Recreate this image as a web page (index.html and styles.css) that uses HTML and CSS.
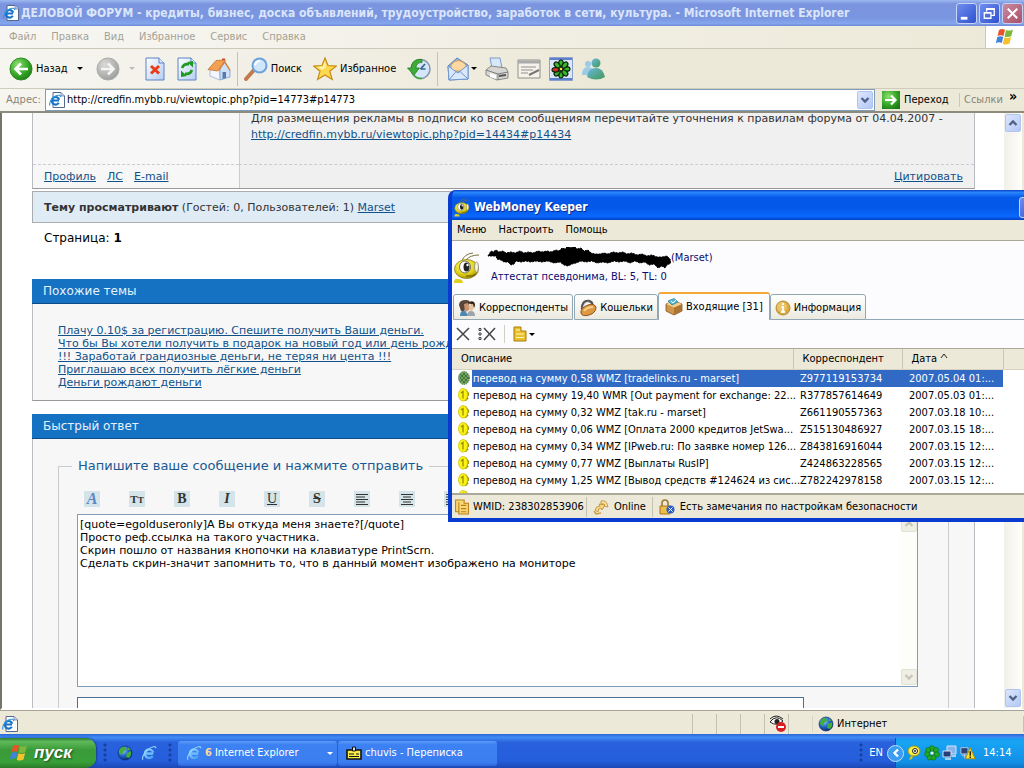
FILE: index.html
```html
<!DOCTYPE html>
<html lang="ru">
<head>
<meta charset="utf-8">
<title>ДЕЛОВОЙ ФОРУМ - Microsoft Internet Explorer</title>
<link rel="stylesheet" href="styles.css">
</head>
<body>
<svg class="defs" aria-hidden="true">
  <defs>
    <linearGradient id="gBlue" x1="0" y1="0" x2="1" y2="1"><stop offset="0" stop-color="#9adcff"/><stop offset="1" stop-color="#3d9cf0"/></linearGradient>
    <radialGradient id="gGreen" cx=".35" cy=".3" r=".8"><stop offset="0" stop-color="#8be070"/><stop offset=".6" stop-color="#35a527"/><stop offset="1" stop-color="#1b7a14"/></radialGradient>
    <radialGradient id="gGray" cx=".35" cy=".3" r=".8"><stop offset="0" stop-color="#dadad8"/><stop offset="1" stop-color="#999"/></radialGradient>
    <linearGradient id="gPage" x1="0" y1="0" x2="1" y2="1"><stop offset="0" stop-color="#fff"/><stop offset="1" stop-color="#b4cdf3"/></linearGradient>
    <radialGradient id="gYellow" cx=".4" cy=".3" r=".8"><stop offset="0" stop-color="#fdfb7a"/><stop offset=".6" stop-color="#dfcf13"/><stop offset="1" stop-color="#8c7c05"/></radialGradient>
    <radialGradient id="gGlobe" cx=".35" cy=".3" r=".8"><stop offset="0" stop-color="#9fd8ff"/><stop offset=".5" stop-color="#2463c8"/><stop offset="1" stop-color="#06205f"/></radialGradient>
    <linearGradient id="gPeople" x1="0" y1="0" x2="1" y2="1"><stop offset="0" stop-color="#6cb6df"/><stop offset="1" stop-color="#3f9a56"/></linearGradient>
  </defs>
  <symbol id="ie" viewBox="0 0 16 16">
    <path d="M4.500 8.600h7.600M11.800 11a4.300 4.300 0 1 1 .5-3.400" fill="none" stroke="url(#gBlue)" stroke-width="2.400"/>
    <path d="M4.500 8.600h7.600" fill="none" stroke="#6fbcf8" stroke-width="2"/>
    <path d="M2.200 14.600C.2 14 2.500 8.500 6.500 5S15 .5 14.800 3.200" fill="none" stroke="#8fd0fa" stroke-width="1.200"/>
  </symbol>
  <symbol id="iepage" viewBox="0 0 16 16">
    <path d="M4 .5h8l3.500 3.500v11.500H4z" fill="#fff" stroke="#53688f"/>
    <path d="M12 .5V4h3.500" fill="#c9d7ee" stroke="#53688f" stroke-width=".7"/>
    <path d="M3 8.500h7M9.800 10.800a3.800 3.800 0 1 1 .4-3" fill="none" stroke="#1673c8" stroke-width="2.200"/>
    <path d="M.8 13.500C0 11 2.500 6 6 4.200s6-1 5.500 1" fill="none" stroke="#2f95dd" stroke-width="1.100"/>
  </symbol>
  <symbol id="flag" viewBox="0 0 20 20">
    <path d="M4 3q3-2 6-.3L8.500 9Q5.500 7.500 2.500 9z" fill="#e8542a"/>
    <path d="M11 3q3 1.400 7-.6L16.300 9q-3.500 2-6.700.4z" fill="#7cb83a"/>
    <path d="M2.300 10q3-1.600 6-.2L6.800 16q-3-1.600-6 .2z" fill="#3f83dc"/>
    <path d="M9.400 10.300q3 1.600 6.700-.2L14.500 16.500q-3.600 2-6.700.2z" fill="#f6c12b"/>
  </symbol>
  <symbol id="back" viewBox="0 0 24 24"><circle cx="12" cy="12" r="11" fill="url(#gGreen)" stroke="#2d8a22"/><path d="M19 12H7M12 6.500 6.500 12l5.500 5.500" fill="none" stroke="#fff" stroke-width="2.600"/></symbol>
  <symbol id="fwd" viewBox="0 0 24 24"><circle cx="12" cy="12" r="11" fill="url(#gGray)" stroke="#aaa"/><path d="M5 12h12M12 6.500l5.500 5.500-5.500 5.500" fill="none" stroke="#f4f4f2" stroke-width="2.600"/></symbol>
  <symbol id="stop" viewBox="0 0 20 24"><path d="M1 1h13l5 5v17H1z" fill="url(#gPage)" stroke="#5a82c4"/><path d="M14 1v5h5" fill="#dce8fb" stroke="#5a82c4"/><path d="m6 9 8 7.500M14 9l-8 7.500" stroke="#ea3a17" stroke-width="3"/></symbol>
  <symbol id="refresh" viewBox="0 0 20 24"><path d="M1 1h13l5 5v17H1z" fill="url(#gPage)" stroke="#5a82c4"/><path d="M14 1v5h5" fill="#dce8fb" stroke="#5a82c4"/><path d="M5 11q2-5 7-3.500M15 13q-2 5-7 3.500" fill="none" stroke="#1f9a22" stroke-width="2.600"/><path d="m10 5 6-1v6.500zM10 19l-6 1v-6.500z" fill="#1f9a22"/></symbol>
  <symbol id="home" viewBox="0 0 24 24"><path d="M15 1.500h3v6h-3z" fill="#c8462c"/><path d="M13 12l5-7 5 8v7l-10 3z" fill="#cfe0f8" stroke="#7f9dc9" stroke-width=".8"/><path d="M3 13l9-3 1 13-10-4z" fill="#f3f6fc" stroke="#9bb0d3" stroke-width=".8"/><path d="M1 12.500 9 3.500 18.500 3 12 12.500 10.500 14z" fill="#f2a052" stroke="#c27430" stroke-width=".8"/><path d="M18 4l5.500 9-1 .7L17.500 6l-5.500 8-1-.8z" fill="#d9823a"/><path d="M15.500 15h3.500v6l-3.500 1z" fill="#5a77ad"/></symbol>
  <symbol id="search" viewBox="0 0 24 24"><path d="m2 22 8-9" stroke="#c07a4e" stroke-width="4" stroke-linecap="round"/><circle cx="15.500" cy="8.500" r="7" fill="#cfe6fb" stroke="#6ea2dc" stroke-width="2"/><path d="M11 8q1-4 5-4" fill="none" stroke="#fff" stroke-width="2"/></symbol>
  <symbol id="star" viewBox="0 0 24 24"><path d="m12 1 3 7.500 8.300.6-6.500 5.200 2.400 8.200L12 18l-7.400 4.500 2.400-8.200L.7 9.100 9 8.500z" fill="#fcd94e" stroke="#c88a14" stroke-width="1.200"/><path d="m12 4 1 6-4 3-5-3 5.500-.5z" fill="#fff3a8"/></symbol>
  <symbol id="history" viewBox="0 0 24 24"><circle cx="13.500" cy="12" r="9.500" fill="#d4e6f7" stroke="#8798ad" stroke-width="1.600"/><path d="M13.500 12 18 7M13.500 12h5" stroke="#38618f" stroke-width="1.700"/><path d="M15 2.500C8 1.500 4 6 4.500 11H.5l6.500 7 5.500-7H9c0-3.500 2-5.500 6-5.500z" fill="#3fac39" stroke="#217d1f" stroke-width=".8"/><path d="M7 18q3 4 8 3.500" fill="none" stroke="#3fac39" stroke-width="1.600"/></symbol>
  <symbol id="mail" viewBox="0 0 24 24"><path d="M2 9 11 1l11 7v14l-19 1z" fill="#8db4ea" stroke="#5e83bd"/><path d="M5 8q7-9 15 0v6H5z" fill="#fcd9a2" stroke="#d79c52"/><path d="m2 9 10 7 10-8V22L3 23z" fill="#d9e8fb" stroke="#6f97d0"/><path d="m3 23 7-8.500M22 22l-8-7.500" stroke="#6f97d0"/></symbol>
  <symbol id="print" viewBox="0 0 24 24"><path d="M5 1h10l2 10H7z" fill="#d8e8fc" stroke="#7b9bc9"/><path d="M1 13 6 9l15 2 2 4v6l-11 2-11-5z" fill="#d7d6d2" stroke="#888"/><path d="m1 13 12 4 10-2M13 17v6" fill="none" stroke="#7c7c7c"/><path d="m14 19 7-1" stroke="#555" stroke-width="2"/><path d="m5 16 6 2v4l-6-2z" fill="#fff"/></symbol>
  <symbol id="edit" viewBox="0 0 24 20"><path d="M1 1h22v18H1z" fill="#f4f2ea" stroke="#8f8f8a"/><path d="M1 3h22" stroke="#aaa" stroke-width="3"/><path d="M4 8h15M4 11h12M4 14h7" stroke="#8f8f8a"/><path d="m12 16 10-5" stroke="#777" stroke-width="2"/></symbol>
  <symbol id="icq" viewBox="0 0 24 24"><path fill="#dfe8f8" stroke="#8aa0c8" d="M.5.5h23v23H.5z"/><path d="M1 2h22M1 22h22" stroke="#5b80ce" stroke-width="2"/><g fill="#39b82c" stroke="#08230a" stroke-width="1.200"><ellipse cx="12" cy="6.500" rx="2.300" ry="3.500"/><ellipse cx="12" cy="17.500" rx="2.300" ry="3.500"/><ellipse cx="17.500" cy="12" rx="3.500" ry="2.300"/><g transform="rotate(45 12 12)"><ellipse cx="12" cy="6.500" rx="2.300" ry="3.500"/><ellipse cx="12" cy="17.500" rx="2.300" ry="3.500"/><ellipse cx="17.500" cy="12" rx="3.500" ry="2.300"/><ellipse cx="6.500" cy="12" rx="3.500" ry="2.300"/></g><ellipse cx="6.500" cy="12.800" rx="3.500" ry="2.300" fill="#d92b22"/></g><circle cx="12" cy="12" r="1.800" fill="#f4e53a" stroke="#222"/></symbol>
  <symbol id="people" viewBox="0 0 24 24"><circle cx="7" cy="7" r="3" fill="#9bcbe8"/><path d="M1 18q0-8 6-8t6 8z" fill="#9ccce4"/><circle cx="15" cy="6" r="4.500" fill="url(#gPeople)"/><path d="M6 20q1-9 9-9 7 0 9 9-9 5-18 0z" fill="url(#gPeople)"/></symbol>
  <symbol id="go" viewBox="0 0 18 18"><path d="M0 0h18v18H0z" fill="url(#gGreen)"/><path d="M3 9h10M9 4.500 13.500 9 9 13.500" fill="none" stroke="#fff" stroke-width="2.200"/></symbol>
  <symbol id="chev" viewBox="0 0 10 10"><path d="m1.500 3 3.500 3.500L8.500 3" fill="none" stroke="currentColor" stroke-width="2.300"/></symbol>
  <symbol id="ant" viewBox="0 0 26 34"><path d="M8 11Q10 4 19 3M12 10q4-5 13-5" fill="none" stroke="#7a7440" stroke-width="1"/><ellipse cx="12.500" cy="19" rx="12" ry="9.500" fill="url(#gYellow)" stroke="#81720c" stroke-width=".7"/><ellipse cx="11" cy="17" rx="5.500" ry="6" fill="#fff" stroke="#555" stroke-width=".8"/><ellipse cx="12.500" cy="17" rx="3" ry="4.500" fill="#222"/><circle cx="13.500" cy="15" r="1.200" fill="#fff"/><ellipse cx="22.500" cy="17" rx="2" ry="5" fill="#f5f5dc" stroke="#777" stroke-width=".7"/><path d="M12 26q7 1 10-2" fill="none" stroke="#5c5208"/><path d="M0 33q0-5 4-4 5 0 5 4z" fill="#e0ce20"/></symbol>
  <symbol id="contacts" viewBox="0 0 18 18"><path d="M1 6q0-5 7-5 4 0 4 3L6 12H3z" fill="#5a4638"/><path d="M6 5l4-1 1 4 1 1-2 3-3 1z" fill="#c99470"/><path d="M10 4q3-3 6-1 2 3 0 6l-3-4z" fill="#33241c"/><path d="M11 6l4-1 1 4-2 3-3-1z" fill="#e8c09c"/><path d="M2 17q0-6 5-5l4 5z" fill="#4f86b2"/><path d="M9 17q0-5 4-5t4 5z" fill="#9aa4ae"/></symbol>
  <symbol id="purse" viewBox="0 0 18 18"><path d="M3 10Q3 1 10 2q4 1 3 5" fill="none" stroke="#555" stroke-width="2.400"/><path d="M4 9q1-6 6-6" fill="none" stroke="#c9c9c9" stroke-width="1"/><path d="M2 14Q1 9 9 6q6-2 8 2 0 6-7 8-7 2-8-2z" fill="#dd9840" stroke="#8f521a"/><path d="M5 12q3-4 9-4" fill="none" stroke="#f9d08d" stroke-width="2"/></symbol>
  <symbol id="inbox" viewBox="0 0 18 18"><path d="m1 6 8-3 8 3v7l-8 4-8-4z" fill="#cf9349" stroke="#7d5423" stroke-width=".8"/><path d="m9 9.500 8-3.500v7l-8 4z" fill="#ad7331"/><path d="m1 6 8-3 8 3-8 3.500z" fill="#f3cf8b"/><path d="m3 3 6-2.500 4 3.500-6 3z" fill="#58bddb" stroke="#1d7896" stroke-width=".7"/><path d="m6 3 2 2 4-4" fill="none" stroke="#fff"/></symbol>
  <symbol id="info" viewBox="0 0 16 16"><circle cx="8" cy="8" r="7" fill="#dba93c" stroke="#a9802c" stroke-width=".8"/><circle cx="7" cy="7" r="5" fill="#ecc468"/><path d="M8 3v2M6.500 7H8v5M6 12h4" stroke="#fff" stroke-width="1.800" fill="none"/></symbol>
  <symbol id="del" viewBox="0 0 14 14"><path d="m1 1 12 12M13 1 1 13" stroke="#444" stroke-width="1.500"/></symbol>
  <symbol id="delall" viewBox="0 0 18 14"><path d="m6 1 11 12M17 1 6 13" stroke="#444" stroke-width="1.500"/><path d="M1 1.500h2v2H1zM1 6h2v2H1zM1 10.500h2v2H1z" fill="none" stroke="#444"/></symbol>
  <symbol id="docs" viewBox="0 0 14 16"><path d="M1 1h7v4h5v10H1z" fill="#eabf2c" stroke="#a97c0c"/><path d="M3 4h4M3 8h8M3 11.500h8" stroke="#fff6c0"/></symbol>
  <symbol id="coin" viewBox="0 0 12 14"><path d="M6 1h2l3 4v3h-1v2h1l-3 3H4z" fill="#a29a10"/><ellipse cx="5" cy="6.800" rx="4.500" ry="6.300" fill="#faf313" stroke="#cfc40d" stroke-width=".8"/><path d="m3 5 2-1.500v7" fill="none" stroke="#8f860a" stroke-width="1.200"/></symbol>
  <symbol id="coing" viewBox="0 0 12 14"><ellipse cx="6" cy="7" rx="5.500" ry="6.500" fill="#7aa550" stroke="#2e6d50" stroke-dasharray="1 1"/><path d="m2 3 8 8M2 7l5 5M5 2l6 6M10 3l-8 8M7 2 2 7M11 6l-6 6" stroke="#2f6650" stroke-width=".8"/></symbol>
  <symbol id="wmdocs" viewBox="0 0 14 15"><path d="M1 1h8v3h4v10H4v-2H1z" fill="#f7d978" stroke="#be7d12"/><path d="M4 3v9M6 6h5M6 9h5M6 12h5" stroke="#be7d12"/></symbol>
  <symbol id="plug" viewBox="0 0 16 16"><path d="M2 11q1-4 5-4l-1-2 6 1-3 5-1-2q-3 0-3 4z" fill="#f6d888" stroke="#bd8a2c" stroke-width=".8"/><path d="M8 2q5-1 6 3l1 3-4-1 1-1q-1-2-4-1z" fill="#f9e4a8" stroke="#bd8a2c" stroke-width=".8"/><path d="M1 12l2 3 5-1" fill="none" stroke="#cf9d3e" stroke-width="1.500"/></symbol>
  <symbol id="lock" viewBox="0 0 16 16"><path d="M3 8V4q0-3 3-3t3 3v4" fill="none" stroke="#9b7a30" stroke-width="1.600"/><path d="M1 7h10v8H1z" fill="#edbd4a" stroke="#a87519"/><circle cx="11.500" cy="10.500" r="4" fill="#2b5ec4"/><path d="m9.500 8.500 4 4m0-4-4 4" stroke="#fff"/></symbol>
  <symbol id="globe" viewBox="0 0 16 16"><circle cx="8" cy="8" r="7" fill="url(#gGlobe)" stroke="#06205f" stroke-width=".6"/><path d="M3 4q3-3 5-2l1 3-3 2-1 3-3-2zM10 8l4-2q1 4-2 7l-3-1zM11 2l3 3-3 0z" fill="#3fae3b"/></symbol>
  <symbol id="eye" viewBox="0 0 18 18"><path d="M1 7q6-8 13-1-6 6-13 1z" fill="#fff" stroke="#222" stroke-width="1"/><path d="M1 4q6-6 13 0" fill="none" stroke="#222" stroke-width="1"/><circle cx="8" cy="6.500" r="2.500" fill="#222"/><circle cx="12" cy="12" r="5" fill="#d81e1e"/><path d="M9 12h6" stroke="#fff" stroke-width="2"/></symbol>
  <symbol id="card" viewBox="0 0 16 14"><path d="M1 4h14v9H1z" fill="#f6ee49" stroke="#111" stroke-width="1.600"/><path d="M6.500 1h3v4h-3z" fill="#ddd" stroke="#111"/><path d="M3 8h5M10 8h3M3 10.500h10" stroke="#111"/></symbol>
  <symbol id="clover" viewBox="0 0 16 16"><g fill="#24a827" stroke="#096f10" stroke-width=".6"><circle cx="8" cy="3.500" r="2.700"/><circle cx="12" cy="5" r="2.500"/><circle cx="12.700" cy="9.500" r="2.600"/><circle cx="9.500" cy="12.700" r="2.500"/><circle cx="5.500" cy="12.500" r="2.500"/><circle cx="3.200" cy="9" r="2.600"/><circle cx="4.200" cy="5" r="2.500"/></g><circle cx="8" cy="8" r="1.600" fill="#e3f6c4"/></symbol>
  <symbol id="net" viewBox="0 0 16 16"><path d="M5 1h9v8H5z" fill="#86b2ee" stroke="#d8e4f5"/><path d="M1 6h8v6H1z" fill="#263d78" stroke="#d8e4f5"/><path d="M3 14h6M10 11h4" stroke="#d8e4f5" stroke-width="1.500"/></symbol>
  <symbol id="netwarn" viewBox="0 0 18 16"><path d="M1 2h8v7H1z" fill="#2d4378" stroke="#bdcbe5"/><path d="M2 11h6M5 9v5" stroke="#bdcbe5"/><path d="m11.500 2 5.500 12.500H6z" fill="#fde22b" stroke="#ae8c09"/><path d="M11.500 6v5M11.500 12v1.500" stroke="#111" stroke-width="1.500"/></symbol>
  <symbol id="key" viewBox="0 0 14 16"><path d="m5 8-3 7 3-1 2-6z" fill="#d6c21a"/><ellipse cx="7" cy="6" rx="6" ry="5" fill="#fbf145" stroke="#a69610"/><circle cx="8" cy="6" r="2.500" fill="#fff" stroke="#222"/><circle cx="8" cy="6" r="1" fill="#222"/></symbol>
  <symbol id="align" viewBox="0 0 16 16"><path d="M2 3.500h12M2 6h9M2 8.500h12M2 11h9M2 13.500h12" stroke="#333"/></symbol>
  <symbol id="alignc" viewBox="0 0 16 16"><path d="M2 3.500h12M4 6h8M2 8.500h12M4 11h8M2 13.500h12" stroke="#333"/></symbol>
</svg>

<div class="desktop">
  <section class="browser">
    <header class="titlebar">
      <svg class="i16"><use href="#iepage"/></svg>
      <h1>ДЕЛОВОЙ ФОРУМ - кредиты, бизнес, доска объявлений, трудоустройство, заработок в сети, культура. - Microsoft Internet Explorer</h1>
      <button class="wbtn" aria-label="Свернуть"><svg viewBox="0 0 20 20"><path d="M4 15h7" stroke="#fff" stroke-width="3"/></svg></button>
      <button class="wbtn" aria-label="Восстановить"><svg viewBox="0 0 20 20"><path d="M7 8V5h8v7h-3M7 5.500h8M4.500 9h7v6h-7zM4 9.500h8" fill="none" stroke="#fff" stroke-width="1.400"/></svg></button>
      <button class="wbtn close" aria-label="Закрыть"><svg viewBox="0 0 20 20"><path d="m5 5 10 10M15 5 5 15" stroke="#fff" stroke-width="2.200"/></svg></button>
    </header>
    <div class="menurow">
      <nav class="menu"><span>Файл</span><span>Правка</span><span>Вид</span><span>Избранное</span><span>Сервис</span><span>Справка</span></nav>
      <div class="brand"><svg class="i20"><use href="#flag"/></svg></div>
    </div>
    <div class="toolbar">
      <button class="tb-back"><svg class="i24"><use href="#back"/></svg>Назад<i class="tri"></i></button>
      <button class="tb-fwd" aria-label="Вперед"><svg class="i24"><use href="#fwd"/></svg><i class="tri dim"></i></button>
      <button aria-label="Остановить"><svg class="doc24"><use href="#stop"/></svg></button>
      <button aria-label="Обновить"><svg class="doc24"><use href="#refresh"/></svg></button>
      <button aria-label="Домой"><svg class="i24"><use href="#home"/></svg></button>
      <span class="sep"></span>
      <button class="tb-find"><svg class="i24"><use href="#search"/></svg>Поиск</button>
      <button class="tb-fav"><svg class="i24"><use href="#star"/></svg>Избранное</button>
      <button class="tb-hist" aria-label="Журнал"><svg class="i24"><use href="#history"/></svg></button>
      <span class="sep"></span>
      <button class="tb-mail" aria-label="Почта"><svg class="i24"><use href="#mail"/></svg><i class="tri"></i></button>
      <button aria-label="Печать"><svg class="i24"><use href="#print"/></svg></button>
      <button aria-label="Правка"><svg class="edit24"><use href="#edit"/></svg></button>
      <button aria-label="ICQ"><svg class="i24"><use href="#icq"/></svg></button>
      <button aria-label="Messenger"><svg class="i24"><use href="#people"/></svg></button>
    </div>
    <div class="address">
      <label for="url">Адрес:</label>
      <div class="urlbox"><svg class="i16"><use href="#iepage"/></svg><input id="url" value="http://credfin.mybb.ru/viewtopic.php?pid=14773#p14773"><button class="sbtn" aria-label="Список адресов"><svg><use href="#chev"/></svg></button></div>
      <button class="go"><svg class="i18"><use href="#go"/></svg>Переход</button>
      <span class="links">Ссылки</span><b class="more">»</b>
    </div>

    <div class="viewport">
      <main class="page">
        <article class="post">
          <div class="author"></div>
          <div class="body">Для размещения рекламы в подписи ко всем сообщениям перечитайте уточнения к правилам форума от 04.04.2007 -<br><a href="#">http://credfin.mybb.ru/viewtopic.php?pid=14434#p14434</a></div>
          <div class="author foot"><a href="#">Профиль</a><a href="#">ЛС</a><a href="#">E-mail</a></div>
          <div class="body foot right"><a href="#">Цитировать</a></div>
        </article>
        <p class="viewers"><b>Тему просматривают</b> (Гостей: 0, Пользователей: 1) <a href="#">Marset</a></p>
        <p class="pages">Страница: <b>1</b></p>
        <h2>Похожие темы</h2>
        <div class="panel similar">
          <a href="#">Плачу 0.10$ за регистрацию. Спешите получить Ваши деньги.</a>
          <a href="#">Что бы Вы хотели получить в подарок на новый год или день рождения?</a>
          <a href="#">!!! Заработай грандиозные деньги, не теряя ни цента !!!</a>
          <a href="#">Приглашаю всех получить лёгкие деньги</a>
          <a href="#">Деньги рождают деньги</a>
        </div>
        <h2>Быстрый ответ</h2>
        <form class="panel reply">
          <fieldset>
            <legend>Напишите ваше сообщение и нажмите отправить</legend>
            <div class="bb">
              <button type="button" class="fa">A</button><button type="button" class="ft">T<small>T</small></button><button type="button">B</button><button type="button" class="fi">I</button><button type="button" class="fu">U</button><button type="button" class="fs">S</button>
              <button type="button" aria-label="По левому краю"><svg class="i16"><use href="#align"/></svg></button><button type="button" aria-label="По центру"><svg class="i16"><use href="#alignc"/></svg></button><button type="button" aria-label="По правому краю"><svg class="i16"><use href="#align"/></svg></button>
            </div>
            <div class="tabox">
              <textarea aria-label="Сообщение">[quote=egolduseronly]А Вы откуда меня знаете?[/quote]
Просто реф.ссылка на такого участника.
Скрин пошло от названия кнопочки на клавиатуре PrintScrn.
Сделать скрин-значит запомнить то, что в данный момент изображено на мониторе</textarea>
              <div class="sb off"><span class="sbtn up"><svg><use href="#chev"/></svg></span><span class="sbtn"><svg><use href="#chev"/></svg></span></div>
            </div>
            <input class="extra" aria-label="Дополнительно">
          </fieldset>
        </form>
      </main>
      <div class="sb"><span class="sbtn up"><svg><use href="#chev"/></svg></span><span class="sbtn"><svg><use href="#chev"/></svg></span></div>
    </div>
    <footer class="status"><svg class="i16"><use href="#iepage"/></svg><span class="fill"></span><span class="cell"></span><span class="cell"></span><span class="cell"></span><span class="cell"><svg class="i18"><use href="#eye"/></svg></span><span class="cell"></span><span class="zone"><svg class="i16"><use href="#globe"/></svg>Интернет</span></footer>
  </section>

  <section class="keeper">
    <header class="ktitle"><svg class="kant"><use href="#ant"/></svg><h2>WebMoney Keeper</h2><button class="wbtn" aria-label="Свернуть"></button></header>
    <nav class="kmenu"><span>Меню</span><span>Настроить</span><span>Помощь</span></nav>
    <div class="kbody">
      <div class="khead">
        <svg class="kface"><use href="#ant"/></svg>
        <div class="kinfo">
          <div class="kname"><svg viewBox="0 0 184 22"><path d="M1 9l3-5 2 1 3-2 3 2 4-1 3 2 5-1 4 1 5-2 4 2 5-1 4 1 5-2 4 1 5-1 4 1 5-2 3 1 3-3 3 1 3-3 3 2 3-2 3 3 4-1 3 3 4-1 3 3 4 1 5 0 4-1 4 1 5-2 5 1 5-1 4 2 5-1 5 2 5-1 5 2 5-1 5 2 5 0 5-1 3 3 1 4-4 2-2 3-3-2-4 2-4-4-5 1-4-3-5 1-5-2-5 2-5-2-6 1-5-1-6 2-5-1-6 1-5-2-6 1-5-1-5 2-4 1-4 2-4-1-4-3-6 1-6-2-6 1-6-1-5 1-5-1-5 1-5-1-2 3-3 1-3-3-4 0-3-2-4-1-1-3z" stroke="#000" stroke-width="1" stroke-dasharray="2 1"/></svg><span>(Marset)</span></div>
          <div>Аттестат псевдонима, BL: 5, TL: 0</div>
        </div>
      </div>
      <div class="tabs" role="tablist">
        <button role="tab"><svg class="i18"><use href="#contacts"/></svg>Корреспонденты</button>
        <button role="tab"><svg class="i18"><use href="#purse"/></svg>Кошельки</button>
        <button role="tab" class="on" aria-selected="true"><svg class="i18"><use href="#inbox"/></svg>Входящие [31]</button>
        <button role="tab"><svg class="i16"><use href="#info"/></svg>Информация</button>
        <span class="tabline"></span>
      </div>
      <div class="ktools"><svg class="i14"><use href="#del"/></svg><svg class="w18"><use href="#delall"/></svg><i class="ksep"></i><svg class="d14"><use href="#docs"/></svg><i class="tri"></i></div>
      <div class="list">
        <table>
          <colgroup><col class="c1"><col class="c2"><col class="c3"><col></colgroup>
          <thead><tr><th>Описание</th><th>Корреспондент</th><th>Дата <svg class="sort" viewBox="0 0 8 6"><path d="M1 5l3-4 3 4" fill="none" stroke="#222"/></svg></th><th></th></tr></thead>
          <tbody>
            <tr class="sel"><td><div><svg class="coin"><use href="#coing"/></svg><span>перевод на сумму 0,58 WMZ [tradelinks.ru - marset]</span></div></td><td>Z977119153734</td><td>2007.05.04 01:...</td><td></td></tr>
            <tr><td><div><svg class="coin"><use href="#coin"/></svg><span>перевод на сумму 19,40 WMR [Out payment for exchange: 22...</span></div></td><td>R377857614649</td><td>2007.05.03 01:...</td><td></td></tr>
            <tr><td><div><svg class="coin"><use href="#coin"/></svg><span>перевод на сумму 0,32 WMZ [tak.ru - marset]</span></div></td><td>Z661190557363</td><td>2007.03.18 10:...</td><td></td></tr>
            <tr><td><div><svg class="coin"><use href="#coin"/></svg><span>перевод на сумму 0,06 WMZ [Оплата 2000 кредитов JetSwa...</span></div></td><td>Z515130486927</td><td>2007.03.15 18:...</td><td></td></tr>
            <tr><td><div><svg class="coin"><use href="#coin"/></svg><span>перевод на сумму 0,34 WMZ [IPweb.ru: По заявке номер 126...</span></div></td><td>Z843816916044</td><td>2007.03.15 12:...</td><td></td></tr>
            <tr><td><div><svg class="coin"><use href="#coin"/></svg><span>перевод на сумму 0,77 WMZ [Выплаты RusIP]</span></div></td><td>Z424863228565</td><td>2007.03.15 12:...</td><td></td></tr>
            <tr><td><div><svg class="coin"><use href="#coin"/></svg><span>перевод на сумму 1,25 WMZ [Вывод средств #124624 из сис...</span></div></td><td>Z782242978158</td><td>2007.03.15 12:...</td><td></td></tr>
            <tr><td><div><svg class="coin"><use href="#coin"/></svg></div></td><td></td><td></td><td></td></tr>
          </tbody>
        </table>
      </div>
      <footer class="kstatus"><span><svg class="i16"><use href="#wmdocs"/></svg>WMID: 238302853906</span><span><svg class="i16"><use href="#plug"/></svg>Online</span><span><svg class="i16"><use href="#lock"/></svg>Есть замечания по настройкам безопасности</span></footer>
    </div>
  </section>

  <footer class="taskbar">
    <button class="start"><svg class="i20"><use href="#flag"/></svg>пуск</button>
    <i class="grip"></i>
    <svg class="i16"><use href="#globe"/></svg><svg class="i16"><use href="#ie"/></svg>
    <i class="grip"></i>
    <button class="task"><svg class="i16"><use href="#ie"/></svg><b>6</b><span>Internet Explorer</span><i class="tri"></i></button>
    <button class="task"><svg class="i16"><use href="#card"/></svg><span>chuvis - Переписка</span></button>
    <span class="fill"></span>
    <i class="grip"></i>
    <span class="lang">EN</span>
    <div class="tray"><span class="expand"><svg><use href="#chev"/></svg></span><svg class="i16"><use href="#key"/></svg><svg class="i16"><use href="#clover"/></svg><svg class="i16"><use href="#net"/></svg><svg class="i16"><use href="#netwarn"/></svg><time>14:14</time></div>
  </footer>
</div>
</body>
</html>
```
FILE: styles.css
```css
* { box-sizing: border-box; }
body { margin: 0; font: 11px/14px "DejaVu Sans Condensed", "DejaVu Sans", sans-serif; color: #000; }
button { font: inherit; color: inherit; background: none; border: 0; padding: 0; display: flex; align-items: center; }
h1, h2, p { margin: 0; }
svg { display: block; flex: none; }
.defs { position: absolute; width: 0; height: 0; }
.i14 { width: 14px; height: 14px; }
.i16 { width: 16px; height: 16px; }
.i18 { width: 18px; height: 18px; }
.i20 { width: 20px; height: 20px; }
.i24 { width: 24px; height: 24px; }
.doc24 { width: 20px; height: 24px; }
.edit24 { width: 24px; height: 20px; }
.w18 { width: 18px; height: 14px; }
.d14 { width: 14px; height: 16px; }
.fill { flex: 1; }
.tri { border: 3px solid transparent; border-top-color: #000; border-bottom: 0; flex: none; }
.tri.dim { border-top-color: #bbb; }

.desktop { position: relative; height: 100vh; overflow: hidden; display: flex; flex-direction: column; }
.browser { flex: 1; min-height: 0; display: flex; flex-direction: column; background: #ece9d8; }

.titlebar { height: 26px; flex: none; display: flex; align-items: center; gap: 2px; padding: 0 1px 0 3px; background: linear-gradient(#9db9f0, #7b94df 15%, #7a96e0 70%, #84a6ee 90%, #6f8ad6); color: #dbe5fa; }
.titlebar h1 { flex: 1; font-size: 12px; line-height: 16px; font-weight: bold; white-space: nowrap; overflow: hidden; }
.wbtn { width: 21px; height: 21px; border: 1px solid #c6d3f5; border-radius: 3px; background: linear-gradient(135deg, #6f8df0, #2f51cd); flex: none; }
.wbtn svg { width: 19px; height: 19px; }
.wbtn.close { background: linear-gradient(135deg, #c98ba0, #a8506a); }

.menurow { height: 23px; flex: none; display: flex; border-bottom: 1px solid #cbc8b8; background: linear-gradient(90deg, #f7f6f2, #ece9d8); }
.menu { flex: 1; display: flex; align-items: center; gap: 15px; padding-left: 9px; color: #a5a294; }
.brand { width: 39px; background: #fff; display: flex; align-items: center; justify-content: center; border-left: 1px solid #cbc8b8; }

.toolbar { height: 40px; flex: none; display: flex; align-items: center; padding-left: 9px; gap: 8px; border-bottom: 1px solid #d0cdbd; background: linear-gradient(90deg, #f6f5f0, #ece9d8 60%); }
.toolbar button { gap: 3px; }
.toolbar .tri { margin-left: 6px; }
.toolbar .tb-back { margin-right: 5px; }
.toolbar .tb-fwd { margin-right: 0; }
.toolbar .doc24 { margin: 0 2px; }
.sep { width: 1px; height: 34px; background: #c5c2b2; margin: 0 -2px; }
.toolbar .tb-fav { margin-left: 3px; }
.toolbar .tb-hist { margin-left: 3px; }
.toolbar .tb-mail { margin-left: 2px; gap: 1px; }
.toolbar .tb-mail .tri { margin-left: 0; }

.address { height: 24px; flex: none; display: flex; align-items: center; background: linear-gradient(90deg, #f6f5f0, #ece9d8 60%); border-bottom: 2px solid #8d8b7e; color: #888577; }
.address label { width: 45px; padding-left: 6px; flex: none; }
.urlbox { flex: 1; height: 22px; display: flex; align-items: center; gap: 2px; padding: 0 1px 0 3px; background: #fff; border: 1px solid #7f9db9; }
.urlbox input { flex: 1; border: 0; padding: 0; font: inherit; color: #000; outline: 0; background: none; }
.sbtn { width: 16px; height: 18px; flex: none; display: flex; align-items: center; justify-content: center; background: linear-gradient(135deg, #dce6fd, #b4c8f6); border: 1px solid #b0c4f0; border-radius: 2px; color: #4d6185; }
.sbtn svg { width: 10px; height: 10px; }
.sbtn.up svg { transform: rotate(180deg); }
.go { width: 84px; padding-left: 7px; gap: 4px; color: #000; }
.links { width: 50px; padding-left: 4px; border-left: 1px solid #cbc8b8; }
.more { width: 15px; color: #000; font-size: 14px; align-self: flex-start; }

.viewport { flex: 1; min-height: 0; display: flex; overflow: hidden; border-left: 2px solid #77756a; border-right: 2px solid #ece9d8; border-bottom: 2px solid #fff; background: #fff; }
.page { flex: 1; min-width: 0; padding: 0 29px 0 30px; font: 11px/16px "DejaVu Sans", sans-serif; color: #333; }
.page a { color: #105289; }
.sb { width: 18px; padding: 1px; display: flex; flex-direction: column; justify-content: space-between; background: linear-gradient(90deg, #f1f0e8, #fefefb); }
.sb.off { background: #fdfdf9; }
.sb.off .sbtn { background: #f0efe6; border-color: #e3e1d6; color: #c8c6b8; height: 16px; }

.post { display: grid; grid-template-columns: 206px 1fr; margin-top: -2px; border: 1px solid #b9bcc0; border-top: 0; border-bottom-color: #999; }
.post > * { background: #f0f0f0; border-left: 1px solid #c9ced4; padding-left: 11px; }
.post > .author { background: #f7f7f7; border-left: 0; }
.post > .body:not(.foot) { height: 53px; }
.post > .foot { border-top: 1px dashed #c8ccd0; height: 24px; padding-top: 1px; display: flex; align-items: center; gap: 11px; }
.post > .right { justify-content: flex-end; padding-right: 11px; }
.viewers { height: 32px; margin-top: 2px; padding: 8px 11px; background: #dfebf5; border: 1px solid #a9adb2; }
.pages { font-size: 12px; color: #000; padding: 7px 12px 0; height: 56px; }
.page h2 { height: 25px; padding: 4px 11px; background: #1572c2; border-bottom: 1px solid #0d4d86; color: #e6f1fb; font: 12px/17px "DejaVu Sans", sans-serif; }
.panel { background: #f7f7f7; border: 1px solid #b9bcc0; border-top: 0; border-bottom-color: #999; }
.similar { height: 97px; margin-bottom: 13px; padding: 20px 25px; display: flex; flex-direction: column; align-items: flex-start; line-height: 13px; }
.reply { padding: 18px 25px 20px; }
fieldset { margin: 0; padding: 0 30px 20px 18px; border: 1px solid #c8cbd0; }
legend { margin-left: -5px; padding: 0 6px; font-size: 13px; line-height: 18px; color: #1a5a92; }
.bb { display: flex; gap: 29px; padding: 16px 7px 7px; }
.bb button { width: 16px; height: 16px; flex: none; justify-content: center; background: #d5e4e8; font: bold 14px/16px "Liberation Serif", serif; color: #333; }
.bb .fa { color: #5b86c8; font-style: italic; font-size: 16px; }
.bb .ft { font-size: 11px; }
.bb .ft small { font-size: 9px; align-self: flex-end; line-height: 13px; }
.bb .fi { font-style: italic; }
.bb .fu { text-decoration: underline; font-weight: normal; }
.bb .fs { text-decoration: line-through; }
.tabox { height: 173px; display: flex; border: 1px solid #7f9db9; background: #fff; }
.tabox textarea { flex: 1; resize: none; border: 0; outline: 0; padding: 3px 2px; font: 11px/13px "DejaVu Sans", sans-serif; color: #000; background: none; }
.tabox .sb { width: 17px; }
.extra { display: block; width: 86.5%; height: 22px; margin-top: 10px; border: 1px solid #4a6f95; background: #fff; }

.status { height: 24px; flex: none; display: flex; align-items: center; padding: 3px 0 0 2px; border-top: 1px solid #a5a396; background: #ece9d8; }
.cell { width: 24px; height: 20px; display: flex; align-items: center; border-left: 1px solid #c5c2b2; padding-left: 4px; }
.zone { width: 212px; display: flex; align-items: center; gap: 3px; padding-left: 5px; border-left: 1px solid #d9d6c6; border-right: 1px solid #c5c2b2; }

.keeper { position: absolute; left: 448px; top: 190px; right: -20px; border: solid #0a3bd0; border-width: 0 4px 4px; border-radius: 8px 8px 0 0; background: #0a3bd0; overflow: hidden; }
.ktitle { height: 30px; margin: 0 -4px; padding: 4px 4px 0 6px; display: flex; align-items: center; gap: 4px; color: #fff; background: linear-gradient(#0a3fc8, #2a86fb 8%, #0559ea 25%, #0458e8 60%, #0868ff 88%, #0340c4); }
.ktitle h2 { flex: 1; font-size: 12px; line-height: 16px; text-shadow: 1px 1px #0a2a8a; }
.kant { width: 16px; height: 20px; }
.kmenu { height: 21px; display: flex; align-items: center; gap: 12px; padding-left: 5px; background: #ece9d8; border-bottom: 1px solid #aca899; }
.kbody { background: #fcfcfe; }
.khead { height: 51px; display: flex; align-items: center; gap: 9px; padding: 0 2px; color: #0b0b6b; }
.kface { width: 26px; height: 34px; }
.kinfo { display: grid; gap: 4px; padding-left: 1px; }
.kname { display: flex; align-items: center; margin-left: -3px; height: 16px; }
.kname svg { width: 184px; height: 22px; }
.kinfo > div + div { padding-left: 1px; }
.tabs { display: flex; align-items: flex-end; height: 28px; }
.tabs button { height: 26px; padding: 2px 4px 0; gap: 3px; border: 1px solid #91a7b4; border-radius: 3px 3px 0 0; background: linear-gradient(#fff, #eceadf); white-space: nowrap; margin-left: 1px; }
.tabs .on { height: 28px; padding: 0 6px; border-top: 2px solid #f5a83a; border-bottom: 0; background: #fcfcfe; margin-left: 0; }
.tabs button:last-of-type { margin-left: 0; }
.tabline { flex: 1; height: 1px; background: #91a7b4; }
.ktools { height: 28px; display: flex; align-items: center; gap: 8px; padding-left: 4px; }
.ktools .tri { margin-left: -6px; }
.ksep { width: 1px; height: 18px; background: #d2cfc0; }
.list { height: 147px; overflow: hidden; background: #fff; border-top: 1px solid #aca899; border-bottom: 2px solid #aca899; }
table { width: 100%; table-layout: fixed; border-collapse: collapse; white-space: nowrap; }
.c1 { width: 341px; }
.c2 { width: 109px; }
.c3 { width: 101px; }
th { height: 20px; padding: 0 9px; text-align: left; font-weight: normal; background: #ece9d8; border-right: 1px solid #c9c6b6; border-bottom: 1px solid #d5d2c2; }
.sort { display: inline; width: 8px; height: 6px; vertical-align: 3px; }
td { height: 17px; padding: 1px 7px 0; }
td:first-child { padding: 0 0 0 6px; }
td div { display: flex; align-items: center; gap: 2px; height: 17px; }
td div span { padding-left: 1px; line-height: 17px; flex: 1; }
.coin { width: 12px; height: 14px; }
.sel td:not(:last-child), .sel td div span { background: #316ac5; color: #fff; }
.sel td:not(:last-child):first-child { background: #fff; }
.kstatus { height: 23px; display: flex; align-items: center; background: #ece9d8; }
.kstatus span { display: flex; align-items: center; gap: 5px; padding: 0 6px 0 6px; height: 20px; border-right: 1px solid #c5c2b2; white-space: nowrap; }
.kstatus span:first-child { padding: 0 2px; gap: 3px; }
.kstatus span:last-child { border: 0; }

.taskbar { height: 34px; flex: none; display: flex; align-items: center; padding-top: 4px; color: #fff; background: linear-gradient(#2a65d8, #3f8cf3 10%, #2961dd 25%, #245edb 80%, #1c48b4); }
.start { width: 96px; height: 30px; padding-left: 9px; gap: 5px; border-radius: 0 10px 10px 0; background: linear-gradient(#2f7a31, #5fb95a 12%, #3a9a38 40%, #39a039 80%, #2b7a2a); font: italic bold 17px/24px "Liberation Sans", sans-serif; text-shadow: 1px 1px 2px #1b4a1b; box-shadow: 1px 0 2px #1a3f90; }
.grip { width: 5px; height: 20px; margin: 0 5px 0 7px; background: radial-gradient(circle at 2px 2px, #173f9e 1px, transparent 2px) 0 0 / 5px 5px; }
.taskbar > .i16 { margin: 0 4px; }
.task { width: 159px; height: 25px; margin-right: 1px; padding: 0 4px 0 8px; gap: 3px; border-radius: 3px; background: linear-gradient(#5a9bf8, #3c81f3 15%, #3c7ef0 85%, #2f68d8); text-align: left; }
.task span { flex: 1; }
.task b { color: #f9d9a0; }
.task .tri { border-top-color: #fff; }
.lang { padding-right: 12px; }
.tray { height: 30px; width: 129px; display: flex; align-items: center; gap: 2px; border-left: 1px solid #0f4fae; background: linear-gradient(#1a9cf0, #17a3f3 15%, #1290e6 80%, #0e75c8); }
.expand { width: 17px; height: 17px; flex: none; border-radius: 50%; background: #3c9df0; border: 1px solid #bfe0fb; display: flex; align-items: center; justify-content: center; margin-left: -9px; }
.expand svg { width: 10px; height: 10px; transform: rotate(90deg); }
.tray time { margin-left: 5px; }
```
